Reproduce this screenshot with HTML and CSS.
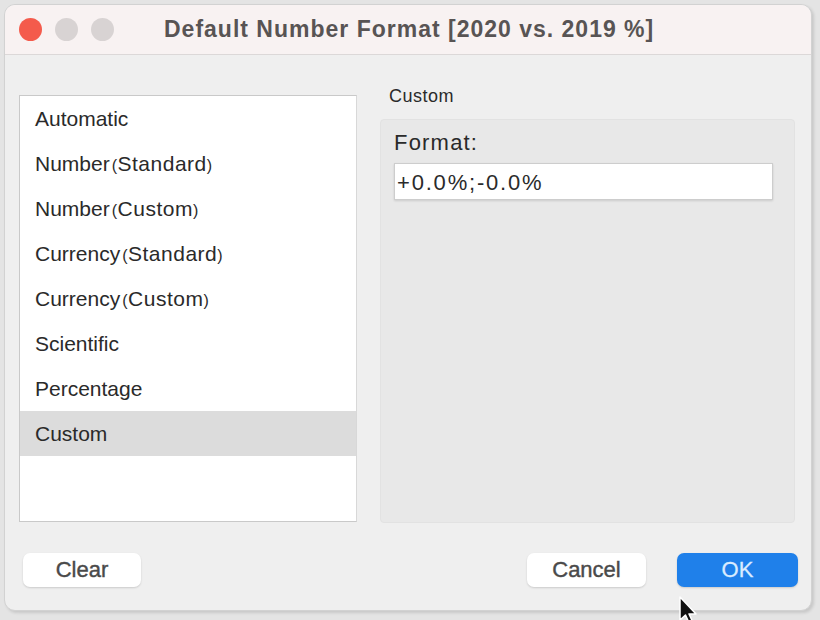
FILE: index.html
```html
<!DOCTYPE html>
<html>
<head>
<meta charset="utf-8">
<link rel="stylesheet" href="styles.css">
</head>
<body>
<div class="window">
  <div class="titlebar">
    <div class="lights">
      <span class="light red"></span>
      <span class="light grey"></span>
      <span class="light grey"></span>
    </div>
    <div class="title">Default Number Format [2020 vs. 2019 %]</div>
  </div>
  <div class="content">
    <div class="main">
      <ul class="list">
        <li>Automatic</li>
        <li>Number<span class="sub"><span class="paren">(</span>Standard<span class="paren">)</span></span></li>
        <li>Number<span class="sub"><span class="paren">(</span>Custom<span class="paren">)</span></span></li>
        <li>Currency<span class="sub"><span class="paren">(</span>Standard<span class="paren">)</span></span></li>
        <li>Currency<span class="sub"><span class="paren">(</span>Custom<span class="paren">)</span></span></li>
        <li>Scientific</li>
        <li>Percentage</li>
        <li class="selected">Custom</li>
      </ul>
      <div class="side">
        <div class="side-label">Custom</div>
        <div class="panel">
          <div class="format-label">Format:</div>
          <div class="input">+0.0%;-0.0%</div>
        </div>
      </div>
    </div>
    <div class="buttons">
      <button class="btn">Clear</button>
      <div class="spacer"></div>
      <button class="btn">Cancel</button>
      <button class="btn primary">OK</button>
    </div>
  </div>
  <svg class="cursor" width="22" height="30" viewBox="0 0 22 30"><path d="M2 1 L2 24 L7.5 19 L11.5 28 L15 26.5 L11 18 L18 18 Z" fill="#111" stroke="#fff" stroke-width="1.5" stroke-linejoin="round"/></svg>
</div>
</body>
</html>
```
FILE: styles.css
```css
html, body {
  margin: 0;
  padding: 0;
}
body {
  width: 820px;
  height: 620px;
  background: #e4e4e4;
  font-family: "Liberation Sans", Arial, sans-serif;
  overflow: hidden;
  padding-top: 4px;
  padding-left: 4px;
  box-sizing: border-box;
}
.window {
  position: relative;
  width: 808px;
  height: 607px;
  background: #efefef;
  border: 1px solid #d2d2d2;
  border-radius: 11px;
  box-sizing: border-box;
  box-shadow: 2px 2px 3px rgba(0,0,0,0.12);
  display: flex;
  flex-direction: column;
}
.titlebar {
  height: 50px;
  flex: none;
  background: #f8f2f2;
  border-bottom: 1px solid #dcd8d8;
  border-radius: 10px 10px 0 0;
  display: flex;
  align-items: center;
  box-sizing: border-box;
}
.lights {
  display: flex;
  gap: 13px;
  padding-left: 14px;
}
.light {
  width: 23px;
  height: 23px;
  border-radius: 50%;
  background: #d8d3d3;
}
.light.red {
  background: #f45b4c;
}
.title {
  margin-left: 50px;
  font-size: 23px;
  font-weight: bold;
  color: #585454;
  letter-spacing: 1px;
}
.content {
  flex: 1;
  display: flex;
  flex-direction: column;
  padding: 40px 13px 23px 14px;
}
.main {
  display: flex;
  gap: 23px;
}
.list {
  list-style: none;
  margin: 0;
  padding: 0;
  width: 338px;
  height: 427px;
  box-sizing: border-box;
  background: #fff;
  border: 1px solid #c9c9c9;
  border-right-color: #d8d8d8;
}
.list li {
  height: 45px;
  line-height: 46px;
  padding-left: 15px;
  font-size: 21px;
  color: #2a2a2a;
}
.list li.selected {
  background: #dcdcdc;
}
.sub {
  margin-left: 2px;
  letter-spacing: 0.5px;
}
.paren {
  font-size: 16px;
}
.side {
  flex: 1;
  display: flex;
  flex-direction: column;
  margin-top: -10px;
  margin-right: 3px;
}
.side-label {
  font-size: 18px;
  color: #2a2a2a;
  padding-left: 9px;
  height: 34px;
  line-height: 22px;
  letter-spacing: 0.5px;
}
.panel {
  height: 404px;
  background: #e8e8e8;
  border: 1px solid #e2e2e2;
  border-radius: 4px;
  padding: 10px 21px 0 13px;
  box-sizing: border-box;
}
.format-label {
  font-size: 22px;
  color: #2a2a2a;
  height: 33px;
  line-height: 26px;
  letter-spacing: 1.2px;
}
.input {
  height: 37px;
  line-height: 37px;
  background: #fff;
  border: 1px solid #cdcdcd;
  box-sizing: border-box;
  padding-left: 2px;
  font-size: 22px;
  letter-spacing: 1.8px;
  color: #2a2a2a;
  box-shadow: 0 1px 2px rgba(0,0,0,0.12);
}
.buttons {
  margin-top: auto;
  display: flex;
  align-items: center;
  gap: 31px;
}
.spacer {
  flex: 1;
}
.btn {
  width: 119px;
  height: 34px;
  border: none;
  border-radius: 7px;
  background: #fff;
  font-family: "Liberation Sans", Arial, sans-serif;
  font-size: 22px;
  color: #4a4a4a;
  -webkit-text-stroke: 0.4px #4a4a4a;
  box-shadow: 0 1px 2px rgba(0,0,0,0.15);
  padding: 0;
}
.btn:first-child {
  margin-left: 4px;
  width: 118px;
}
.btn.primary {
  width: 121px;
  background: #1f80ea;
  color: #d9ecff;
  -webkit-text-stroke: 0.3px #d9ecff;
}
.cursor {
  position: absolute;
  left: 673px;
  top: 591px;
}
```
